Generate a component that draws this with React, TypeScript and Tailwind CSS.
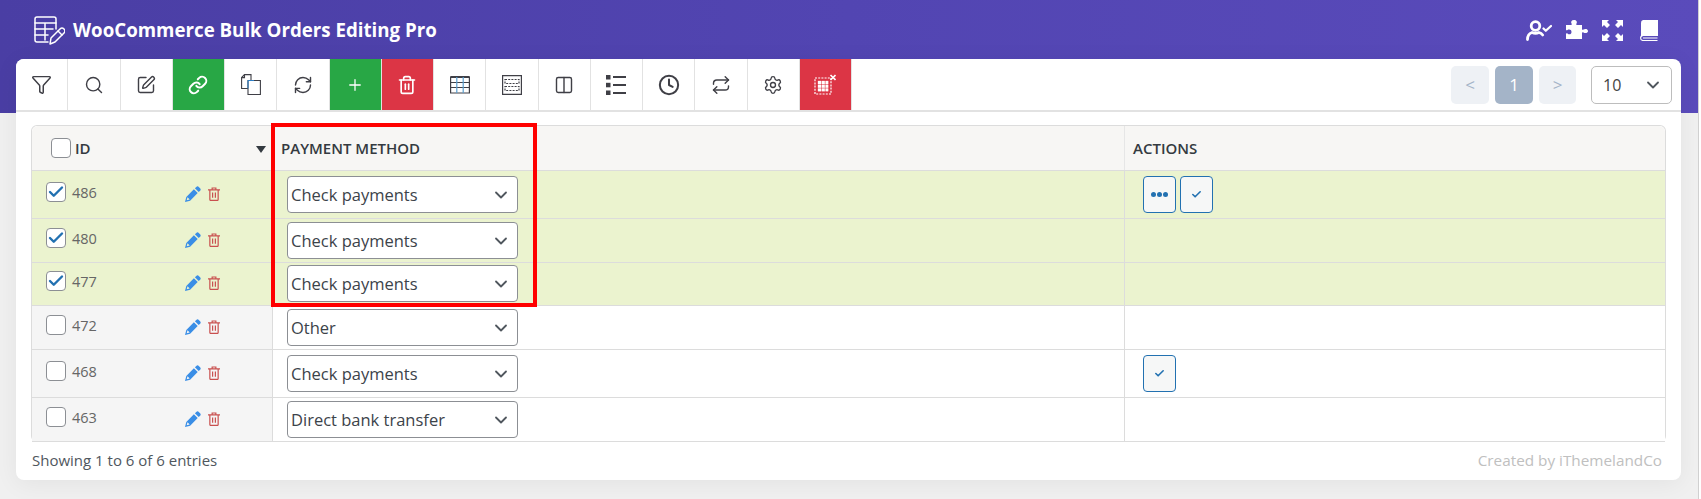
import { Check, ChevronDown, Clock, Link, Plus, RefreshCw, Repeat, Search, Settings, SquarePen, Trash2, Funnel, Columns2 } from "lucide-react";
import type { ReactNode } from "react";

const font = { fontFamily: '"Open Sans", sans-serif' };

function TitleIcon() {
  return (
    <svg width="32" height="32" viewBox="0 0 32 32" fill="none" stroke="white" strokeWidth="1.5" strokeLinejoin="round" strokeLinecap="round">
      <path d="M15 28H4a2 2 0 0 1-2-2V5a2 2 0 0 1 2-2h17a2 2 0 0 1 2 2v10" />
      <path d="M2 9h21M2 15h18M2 21h13M12 9v17" />
      <path d="M17 30l1-6 9-9a2 2 0 0 1 4 4l-9 9z" />
      <path d="M25 17l4 4" />
    </svg>
  );
}

function CopyIcon() {
  return (
    <svg width="20" height="21" viewBox="0 0 20 21" fill="none" strokeWidth="1.1">
      <path d="M7 14.500H.6V3.500L3.500.6H10V6" stroke="#3f3f46" />
      <path d="M3.500.6v3H.6" stroke="#3f3f46" />
      <path d="M7 6.500h12.400v14H7z" stroke="#3f3f46" />
      <path d="M7 6.500h6M7 6.500v8" stroke="#2e7ec4" />
    </svg>
  );
}

function TableIcon() {
  return (
    <svg width="20" height="18" viewBox="0 0 20 18" fill="none" strokeWidth="1.2" stroke="#3f3f46">
      <path d="M.6 1h18.800v16H.6z" />
      <path d="M.6 1h18.800" strokeWidth="2" />
      <path d="M.6 6.500h18.800M.6 11.500h18.800" />
      <path d="M6.800 1v16M13.200 1v16" stroke="#5b9fcf" />
    </svg>
  );
}

function DashedTableIcon() {
  return (
    <svg width="20" height="20" viewBox="0 0 20 20" fill="none" stroke="#3f3f46" strokeWidth="1.2">
      <path d="M.6.6h18.800v18.800H.6z" />
      <path d="M3 4.500h14v4H3zM3 11.500h14v4H3z" strokeDasharray="2 1.2" />
    </svg>
  );
}

function ListIcon() {
  return (
    <svg width="20" height="20" viewBox="0 0 20 20" fill="#3f3f46">
      <rect x="0" y="0" width="4.500" height="4.500" />
      <rect x="0" y="7.800" width="4.500" height="4.500" />
      <rect x="0" y="15.500" width="4.500" height="4.500" />
      <rect x="7" y="1" width="13" height="2" />
      <rect x="7" y="9" width="13" height="2" />
      <rect x="7" y="17" width="13" height="2" />
    </svg>
  );
}

function CloseGridIcon() {
  return (
    <svg width="22" height="22" viewBox="0 0 22 22" fill="none" stroke="white">
      <path d="M1 4h16v16H1z" strokeDasharray="2 1.2" strokeWidth="1.2" />
      <path d="M4 7h3v3H4zM7.800 7h3v3h-3zM11.600 7h2.600v3h-2.600zM4 10.800h3v3H4zM7.800 10.800h3v3h-3zM11.600 10.800h2.600v3h-2.600zM4 14.600h3v2.600H4zM7.800 14.600h3v2.600h-3zM11.600 14.600h2.600v2.600h-2.600z" fill="white" strokeWidth="0.3" />
      <path d="M16.500 1l5 5M21.500 1l-5 5" strokeWidth="1.600" />
    </svg>
  );
}

function UserCheckIcon() {
  return (
    <svg width="26" height="21" viewBox="0 0 26 21" fill="none" stroke="white" strokeWidth="2.800" strokeLinecap="round" strokeLinejoin="round">
      <circle cx="9.500" cy="6" r="4.300" />
      <path d="M1.500 19.500c0-3.500 1.500-6 4.500-7 2.300 1 4.700 1 7 0 1.500.4 2.800 1.300 3.700 2.500" />
      <path d="M17.500 8.500l2.300 2.300L25 6" strokeWidth="2.200" />
    </svg>
  );
}

function ExpandIcon() {
  return (
    <svg width="21" height="21" viewBox="0 0 21 21" fill="white">
      <path d="M0 0h7L5 2l3 3-3 3-3-3-2 2zM21 0v7l-2-2-3 3-3-3 3-3-2-2zM0 21v-7l2 2 3-3 3 3-3 3 2 2zM21 21h-7l2-2-3-3 3-3 3 3 2-2z" />
    </svg>
  );
}

function PuzzleIcon() {
  return (
    <svg width="22" height="20" viewBox="0 0 22 20" fill="white">
      <path d="M0 5h5c1 0 1-.8.500-1.500C4.500 2 5.500 0 8 0s3.500 2 2.500 3.500C10 4.200 10 5 11 5h5v4c0 1 .8 1 1.500.5C19 8.500 22 8.800 22 11s-3 2.500-4.500 1.500c-.7-.5-1.500-.5-1.500.5v6H0v-5c0-1 .8-1 1.500-.5C3 15 5.500 14.500 5.500 12S3 9 1.500 10C.8 10.500 0 10.500 0 9.500z" />
    </svg>
  );
}

function BookIcon() {
  return (
    <svg width="18" height="21" viewBox="0 0 18 21" fill="none">
      <path d="M3 0h15v16H3a2 2 0 0 0-2 2V3a3 3 0 0 1 2-3z" fill="white" />
      <path d="M.6 18a2.500 2.500 0 0 1 2.500-2.500M.6 18a2.500 2.500 0 0 0 2.500 2.500H17.500M3 18h14.500" stroke="white" strokeWidth="1.100" />
    </svg>
  );
}

function PencilIcon() {
  return (
    <svg width="16" height="16" viewBox="0 0 16 16" fill="#3a8ee6">
      <path d="M11.300.9a1.800 1.800 0 0 1 2.500 0l1.300 1.300a1.800 1.800 0 0 1 0 2.500l-1.400 1.400-3.800-3.800zM8.900 3.300l3.800 3.800-7.600 7.600L0 16l1.300-5.100zM2.500 11.300l-.8 3 3-.8z" />
    </svg>
  );
}

function TrashIcon() {
  return (
    <svg width="12" height="14" viewBox="0 0 13 15" fill="none" stroke="#c9504f" strokeWidth="1.300">
      <path d="M0 3h13M4.500 3V1h4v2M2 3v10.500a1 1 0 0 0 1 1h7a1 1 0 0 0 1-1V3M5 6v5.500M8 6v5.500" />
    </svg>
  );
}

const tools: { icon: ReactNode; bg: string }[] = [
  { icon: <Funnel size={21} strokeWidth={1.7} className="text-[#3f3f46]" />, bg: "bg-white" },
  { icon: <Search size={20} strokeWidth={1.7} className="text-[#3f3f46]" />, bg: "bg-white" },
  { icon: <SquarePen size={20} strokeWidth={1.7} className="text-[#3f3f46]" />, bg: "bg-white" },
  { icon: <Link size={20} strokeWidth={2.4} className="text-white" />, bg: "bg-[#28a745]" },
  { icon: <CopyIcon />, bg: "bg-white" },
  { icon: <RefreshCw size={20} strokeWidth={1.7} className="text-[#3f3f46]" />, bg: "bg-white" },
  { icon: <Plus size={18} strokeWidth={1.7} className="text-white" />, bg: "bg-[#28a745]" },
  { icon: <Trash2 size={20} strokeWidth={2} className="text-white" />, bg: "bg-[#dc3545]" },
  { icon: <TableIcon />, bg: "bg-white" },
  { icon: <DashedTableIcon />, bg: "bg-white" },
  { icon: <Columns2 size={20} strokeWidth={1.7} className="text-[#3f3f46]" />, bg: "bg-white" },
  { icon: <ListIcon />, bg: "bg-white" },
  { icon: <Clock size={22} strokeWidth={2.2} className="text-[#3f3f46]" />, bg: "bg-white" },
  { icon: <Repeat size={20} strokeWidth={1.7} className="text-[#3f3f46]" />, bg: "bg-white" },
  { icon: <Settings size={20} strokeWidth={1.6} className="text-[#3f3f46]" />, bg: "bg-white" },
  { icon: <CloseGridIcon />, bg: "bg-[#dc3545]" },
];

function Box({ checked }: { checked?: boolean }) {
  return (
    <span className="relative block w-5 h-5 shrink-0 rounded-[4px] border border-[#8c8f94] bg-white">
      {checked && <Check size={18} strokeWidth={3.2} className="absolute left-0 top-0 text-[#2271b1]" />}
    </span>
  );
}

function SelectBox({ value, className }: { value: string; className: string }) {
  return (
    <div className={`ml-[14px] w-[231px] h-[37px] flex items-center justify-between rounded-[4px] border border-[#8c8f94] bg-white pl-[3px] pr-[6px] text-[16.500px] text-[#3c434a] ${className}`}>
      <span className="pt-[2px]">{value}</span>
      <ChevronDown size={20} strokeWidth={2.2} className="text-[#50575e]" />
    </div>
  );
}

function ActionButton({ children }: { children: ReactNode }) {
  return (
    <div className="w-[33px] h-[37px] flex items-center justify-center rounded-[4px] border border-[#2271b1] bg-[#f6f7f7] text-[#2271b1]">
      {children}
    </div>
  );
}

const rows = [
  { id: "486", method: "Check payments", checked: true, h: "h-[48px]", idPt: "pt-[11px]", selMt: "mt-[5px]", actions: 2 },
  { id: "480", method: "Check payments", checked: true, h: "h-[44px]", idPt: "pt-[9px]", selMt: "mt-[3px]", actions: 0 },
  { id: "477", method: "Check payments", checked: true, h: "h-[43px]", idPt: "pt-[8px]", selMt: "mt-[2px]", actions: 0 },
  { id: "472", method: "Other", checked: false, h: "h-[44px]", idPt: "pt-[9px]", selMt: "mt-[3px]", actions: 0 },
  { id: "468", method: "Check payments", checked: false, h: "h-[48px]", idPt: "pt-[11px]", selMt: "mt-[5px]", actions: 1 },
  { id: "463", method: "Direct bank transfer", checked: false, h: "h-[44px]", idPt: "pt-[9px]", selMt: "mt-[3px]", actions: 0 },
];

export default function App() {
  return (
    <div className="relative h-[499px] w-[1701px] overflow-hidden bg-[#f0f0f0]" style={font}>
      <div className="h-[113px] bg-gradient-to-r from-[#4a3ea4] via-[#5245b2] to-[#5a4bbb] pl-[33px] pr-[43px] pt-[14px]">
        <div className="flex items-center justify-between">
          <div className="flex items-center gap-[8px]">
            <TitleIcon />
            <span className="text-[18.720px] font-bold text-white">WooCommerce Bulk Orders Editing Pro</span>
          </div>
          <div className="flex items-center gap-[14px]">
            <UserCheckIcon />
            <PuzzleIcon />
            <ExpandIcon />
            <span className="ml-[3px]">
              <BookIcon />
            </span>
          </div>
        </div>
      </div>

      <div className="absolute left-[16px] top-[59px] w-[1665px] h-[421px] rounded-[8px] bg-white shadow-[0_4px_24px_rgba(0,0,0,0.06)]">
        <div className="flex h-[53px] items-stretch justify-between border-b-2 border-[#e2e2e2]">
          <div className="flex">
            {tools.map((t, i) => (
              <div key={i} className={`flex w-[52.250px] items-center justify-center border-r border-[#e2e2e2] ${t.bg} ${i === 0 ? "rounded-tl-[8px]" : ""}`}>
                {t.icon}
              </div>
            ))}
          </div>
          <div className="flex items-start pt-[7px] pr-[9px] text-[17px]">
            <div className="mr-[6px] flex h-[38px] w-[38px] items-center justify-center rounded-[5px] bg-[#eef1f5] text-[#a4b4c8]">&lt;</div>
            <div className="mr-[6px] flex h-[38px] w-[38px] items-center justify-center rounded-[5px] bg-[#a4b4c8] text-white">1</div>
            <div className="mr-[15px] flex h-[38px] w-[37px] items-center justify-center rounded-[5px] bg-[#eef1f5] text-[#a4b4c8]">&gt;</div>
            <div className="flex h-[38px] w-[81px] items-center justify-between rounded-[5px] border border-[#bdbdbd] bg-white pl-[11px] pr-[8px] text-[16px] text-[#444]">
              <span>10</span>
              <ChevronDown size={20} strokeWidth={2.2} className="text-[#50575e]" />
            </div>
          </div>
        </div>

        <div className="relative mx-[15px] mt-[13px] h-[317px] w-[1635px] rounded-[6px] border border-b-2 border-[#dcdcdc]">
          <div className="flex h-[45px] items-center rounded-t-[6px] border-b border-[#dcdcdc] bg-[#f7f6f4] text-[15px] font-semibold text-[#343a40]">
            <div className="relative flex h-full w-[241px] items-center border-r border-[#e6e6e6] pl-[19px]">
              <Box />
              <span className="ml-[4px]">ID</span>
              <span className="absolute right-[6px] top-[20px] h-0 w-0 border-x-[5px] border-t-[7px] border-x-transparent border-t-[#343a40]" />
            </div>
            <div className="w-[852px] border-r border-[#e6e6e6] flex h-full items-center pl-[8px]">PAYMENT METHOD</div>
            <div className="pl-[8px]">ACTIONS</div>
          </div>

          {rows.map((r) => (
            <div key={r.id} className={`flex border-b border-[#dcdcdc] last:border-b-0 ${r.h} ${r.checked ? "bg-[#ebf3cf]" : "bg-white"}`}>
              <div className={`flex w-[241px] border-r border-[#dcdcdc] pl-[14px] ${r.idPt} ${r.checked ? "" : "bg-[#f5f5f5]"}`}>
                <Box checked={r.checked} />
                <span className="ml-[6px] pt-[1px] text-[14.500px] leading-[20px] text-[#666]">{r.id}</span>
                <span className="ml-[88px] mt-[4px] flex items-start gap-[7px]">
                  <PencilIcon />
                  <span className="mt-[1px]">
                    <TrashIcon />
                  </span>
                </span>
              </div>
              <div className="w-[852px] border-r border-[#dcdcdc]">
                <SelectBox value={r.method} className={r.selMt} />
              </div>
              <div className={`flex gap-[4px] pl-[18px] ${r.selMt}`}>
                {r.actions === 2 && (
                  <ActionButton>
                    <span className="flex gap-[1px]">
                      <span className="h-[5px] w-[5px] rounded-full bg-[#2271b1]" />
                      <span className="h-[5px] w-[5px] rounded-full bg-[#2271b1]" />
                      <span className="h-[5px] w-[5px] rounded-full bg-[#2271b1]" />
                    </span>
                  </ActionButton>
                )}
                {r.actions > 0 && (
                  <ActionButton>
                    <Check size={11} strokeWidth={3.500} />
                  </ActionButton>
                )}
              </div>
            </div>
          ))}

          <div className="absolute left-[239px] top-[-3px] h-[184px] w-[266px] border-4 border-[#ff0000]" />
        </div>

        <div className="mx-[17px] mt-[7px] flex justify-between text-[15px] text-[#50575e]">
          <span className="-ml-[1px]">Showing 1 to 6 of 6 entries</span>
          <span className="mr-[2px] text-[15.300px] text-[#c0c0c0]">Created by iThemelandCo</span>
        </div>
      </div>

      <div className="absolute right-0 top-0 h-full w-[3px] border-l border-[#d0d0d0] bg-white" />
    </div>
  );
}
